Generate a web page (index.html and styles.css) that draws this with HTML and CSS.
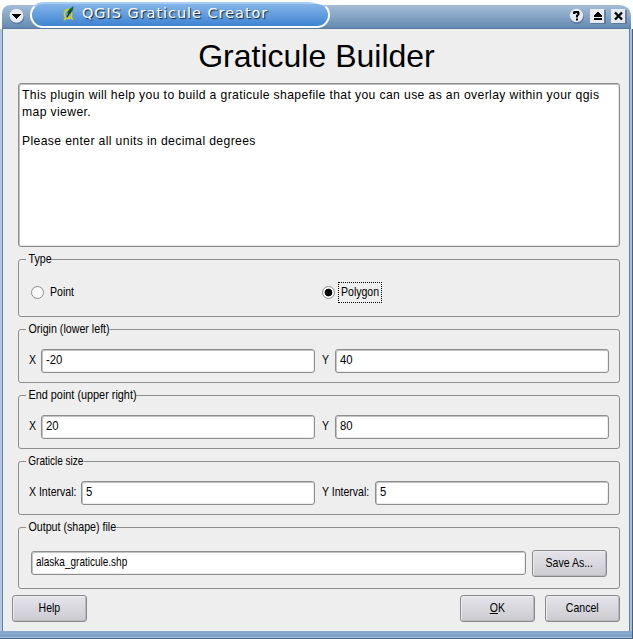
FILE: index.html
```html
<!DOCTYPE html>
<html lang="en">
<head>
<meta charset="utf-8">
<title>QGIS Graticule Creator</title>
<link rel="stylesheet" href="styles.css">
</head>
<body>
<div class="window">
  <header class="titlebar">
    <svg class="menu-btn" width="16" height="17" viewBox="0 0 16 17"><circle cx="8" cy="9" r="7.3" fill="#49698f" opacity=".6"/><circle cx="7.5" cy="7.7" r="7" fill="#e7ebf0"/><path d="M3 6h9v1h-1v1h-1v1H9v1H8v1H7v-1H6V9H5V8H4V7H3z" fill="#000"/></svg>
    <div class="caption">
      <svg class="logo" width="12" height="15" viewBox="0 0 12 15"><ellipse cx="5" cy="8" rx="3.500" ry="4.500" fill="none" stroke="#d3cf28" stroke-width="1.800"/><path d="M6 10l4 3.500M1 14l2-2" stroke="#d3cf28" stroke-width="1.800"/><path d="M10.500 0L6 3.500 4 7l1.500.500L3 12l5-5 2-3z" fill="#176b28"/><path d="M8 4L4 11" stroke="#062b12"/></svg>
      <span class="title-text">QGIS Graticule Creator</span>
    </div>
    <div class="controls">
      <svg width="16" height="17" viewBox="0 0 16 17"><circle cx="8" cy="9" r="7" fill="#49698f" opacity=".6"/><circle cx="7.500" cy="7.500" r="6.700" fill="#e7ebf0"/><path d="M5 6V4.500h1V4h3v1h.5v1.500L8 7.500v2" fill="none" stroke="#000" stroke-width="1.900"/><path d="M7 10.500h2v2H7z"/></svg>
      <svg width="16" height="17" viewBox="0 0 16 17"><path d="M1 2h15v14H1z" fill="#49698f" opacity=".6"/><path d="M0 1h14v14H0z" fill="#e7ebf0"/><path d="M7 4h2v1h1v1h1v1h1v2H4V7h1V6h1V5h1zM4 10h8v2H4z"/></svg>
      <svg width="16" height="17" viewBox="0 0 16 17"><path d="M1 2h15v14H1z" fill="#49698f" opacity=".6"/><path d="M0 1h14v14H0z" fill="#e7ebf0"/><path d="M4 4.500l7 7M11 4.500l-7 7" stroke="#000" stroke-width="2.400"/></svg>
    </div>
  </header>
  <main class="client">
    <h1>Graticule Builder</h1>
    <div class="description">
      <p>This plugin will help you to build a graticule shapefile that you can use as an overlay within your qgis<br>map viewer.</p>
      <p>Please enter all units in decimal degrees</p>
    </div>
    <section class="group type">
      <div class="legend">Type</div>
      <div class="row">
        <label class="choice"><span class="radio"></span><span class="choice-text"><span class="text">Point</span></span></label>
        <label class="choice"><span class="radio on"></span><span class="choice-text focus"><span class="text">Polygon</span></span></label>
      </div>
    </section>
    <section class="group">
      <div class="legend">Origin (lower left)</div>
      <div class="row">
        <span class="name"><span class="text">X</span></span><div class="field"><span class="text number">-20</span></div>
        <span class="name second"><span class="text">Y</span></span><div class="field"><span class="text number">40</span></div>
      </div>
    </section>
    <section class="group">
      <div class="legend wide">End point (upper right)</div>
      <div class="row">
        <span class="name"><span class="text">X</span></span><div class="field"><span class="text number">20</span></div>
        <span class="name second"><span class="text">Y</span></span><div class="field"><span class="text number">80</span></div>
      </div>
    </section>
    <section class="group">
      <div class="legend narrow">Graticle size</div>
      <div class="row">
        <span class="name wide"><span class="text">X Interval:</span></span><div class="field"><span class="text number">5</span></div>
        <span class="name wide second"><span class="text">Y Interval:</span></span><div class="field"><span class="text number">5</span></div>
      </div>
    </section>
    <section class="group output">
      <div class="legend">Output (shape) file</div>
      <div class="row">
        <div class="field"><span class="text path">alaska_graticule.shp</span></div>
        <div class="button"><span class="text">Save As...</span></div>
      </div>
    </section>
    <footer class="actions">
      <div class="button help"><span class="text">Help</span></div>
      <div class="button"><span class="text"><u>O</u>K</span></div>
      <div class="button"><span class="text">Cancel</span></div>
    </footer>
  </main>
</div>
</body>
</html>
```
FILE: styles.css
```css
*, *::after { box-sizing: border-box; }
body {
  margin: 0;
  background: #fff;
  color: #000;
  font: 13px/16px "Liberation Sans", sans-serif;
}
.window {
  width: 633px;
  height: 639px;
  display: flex;
  flex-direction: column;
}
.titlebar {
  height: 29px;
  margin: 0 2px 0 2px;
  display: flex;
  align-items: flex-start;
  background: linear-gradient(#a6bed8, #6287b0) 0 5px / 100% 24px no-repeat;
  border-bottom: 1px solid #5678a0;
  clip-path: path("M0 29V14Q0 5 9 5H20L35 0H300L320 5H618Q629 6 629 17V29Z");
}
.menu-btn { margin: 8px 0 0 7px; }
.caption {
  width: 300px;
  height: 26px;
  margin: 2px 0 0 5px;
  display: flex;
  align-items: flex-start;
  border: 2px solid #fff;
  border-top-color: #a9cdf4;
  border-radius: 13px;
  background: linear-gradient(#85b5e9, #3e83d2);
}
.logo { flex: none; margin: 2px 0 0 31px; }
.title-text {
  margin: 1px 0 0 7px;
  color: #fff;
  font: 14.5px/16px "DejaVu Sans", sans-serif;
  letter-spacing: .95px;
  text-shadow: 1px 1px 1px #102038;
  white-space: nowrap;
}
.controls { display: flex; gap: 5px; margin: 8px 4px 0 auto; }
.client {
  flex: 1;
  display: flex;
  flex-direction: column;
  margin: 0 3px 0 2px;
  padding: 0 9px;
  background: #eee;
  border: solid #5d83ae;
  border-width: 0 1px;
  box-shadow: -2px 0 #b4c8df, 2px 0 #a9c0da, 3px 0 #456180;
}
.window::after {
  content: "";
  height: 8px;
  flex: none;
  background: linear-gradient(#86a8cc 0 3px, #7c9fc6 6px, #a9c0da 6px);
  border: solid #456180;
  border-width: 0 1px 1px 0;
}
h1 {
  height: 54px;
  margin: 0 0 0 1px;
  text-align: center;
  font: 32px/54px "Liberation Sans", sans-serif;
}
.description {
  height: 164px;
  margin: 0 0 12px 6px;
  width: 602px;
  padding: 2px 3px;
  border: 1px solid #8d8d8d;
  border-radius: 3px;
  box-shadow: inset 1px 1px #c0c0c0, inset -1px -1px #e4e4e4;
  background: #fff;
  line-height: 17px;
  letter-spacing: .4px;
  white-space: nowrap;
}
.description p {
  width: max-content;
  margin: 0 0 12px;
  transform: scaleX(.936);
  transform-origin: 0 0;
}
.group {
  width: 602px;
  height: 54px;
  margin: 0 0 12px 6px;
  border: 1px solid #8d8d8d;
  border-radius: 3px;
}
.group.type { height: 58px; }
.group.output { height: 62px; margin-bottom: 6px; }
.legend {
  width: max-content;
  height: 16px;
  margin: -9px 0 0 7px;
  padding: 0 0 0 3px;
  background: #eee;
  transform: scaleX(.82);
  transform-origin: 0 0;
}
.legend.wide { transform: scaleX(.835); }
.legend.narrow { transform: scaleX(.77); }
.row { display: flex; align-items: center; height: 24px; margin: 12px 10px 0; }
.type .row { margin: 13px 0 0 12px; }
.text {
  display: inline-block;
  white-space: nowrap;
  transform: scaleX(.81);
  transform-origin: 0 50%;
}
.text.path { transform: scaleX(.77); }
.text.number { transform: scaleX(.87); }
.choice { width: 291px; display: flex; align-items: center; }
.radio {
  width: 13px;
  height: 13px;
  border: 1px solid #8d8d8d;
  border-radius: 50%;
  background: #fafafa;
}
.radio.on { background: radial-gradient(circle, #000 3.5px, #fafafa 4.2px); }
.choice-text { width: 44px; height: 21px; margin-left: 3px; padding: 1px 2px 0; border: 1px solid transparent; }
.choice-text.focus { border: 1px dotted #000; }
.name { width: 12px; margin-top: -2px; }
.name.wide { width: 52px; }
.name.second { margin-left: 7px; width: 13px; }
.name.wide.second { width: 53px; }
.field {
  flex: 1;
  height: 24px;
  padding: 2px 4px;
  border: 1px solid #8d8d8d;
  border-radius: 3px;
  box-shadow: inset 1px 1px #c4c4c4, inset -1px -1px #ececec;
  background: #fff;
}
.output .row { height: 28px; margin: 14px 12px 0; }
.output .button { margin-left: 6px; }
.button {
  width: 75px;
  height: 27px;
  border: 1px solid #8a8a8d;
  border-radius: 3px;
  box-shadow: inset 1px 1px #ededf1, inset -1px -1px #b9b9bf;
  background: linear-gradient(#e4e4ea, #cbcbd1);
  line-height: 24px;
  text-align: center;
}
.button .text { transform-origin: 50% 50%; }
.actions { display: flex; gap: 10px; }
.actions .help { margin-right: auto; }
```
